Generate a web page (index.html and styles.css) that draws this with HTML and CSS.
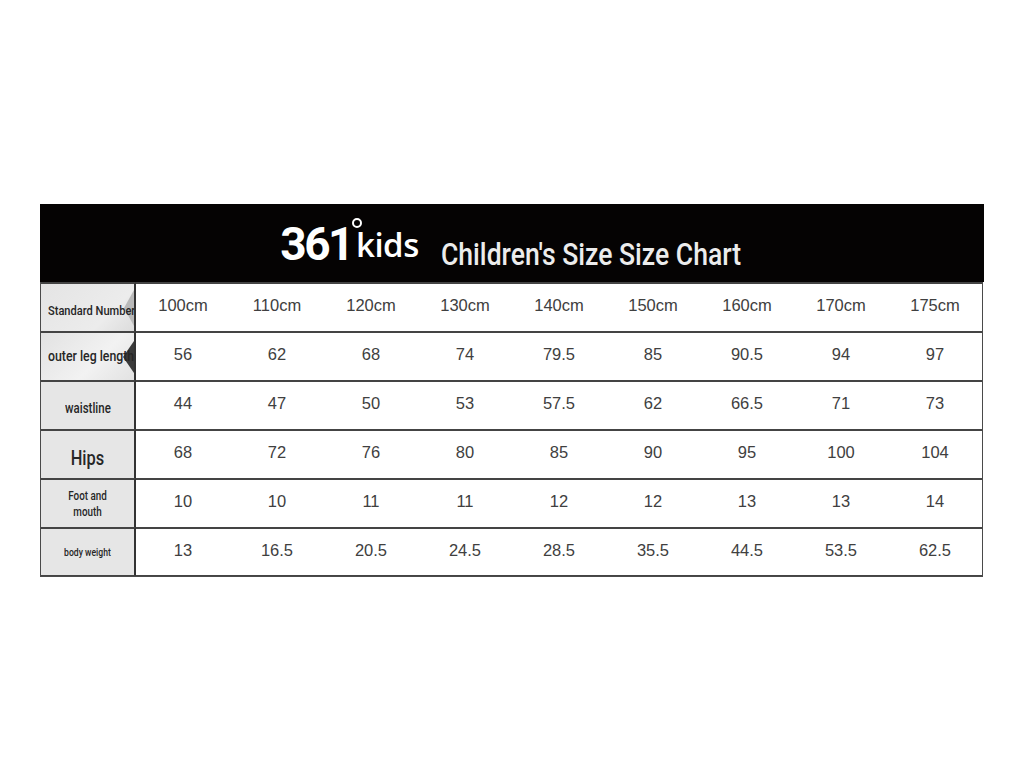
FILE: index.html
```html
<!DOCTYPE html>
<html>
<head>
<meta charset="utf-8">
<link rel="stylesheet" href="styles.css">
</head>
<body>
<div class="chart">
  <div class="head">
    <div class="logo"><span class="num">361</span><span class="deg"></span><span class="kids">kids</span></div>
    <div class="title"><span>Children's Size Size Chart</span></div>
  </div>
  <div class="grid">
    <div class="lab l1"><span>Standard Number</span><i class="shade"></i></div>
    <div class="v">100cm</div><div class="v">110cm</div><div class="v">120cm</div><div class="v">130cm</div><div class="v">140cm</div><div class="v">150cm</div><div class="v">160cm</div><div class="v">170cm</div><div class="v">175cm</div>

    <div class="lab l2"><span>outer leg length</span><i class="arrow"></i></div>
    <div class="v">56</div><div class="v">62</div><div class="v">68</div><div class="v">74</div><div class="v">79.5</div><div class="v">85</div><div class="v">90.5</div><div class="v">94</div><div class="v">97</div>

    <div class="lab l3"><span>waistline</span></div>
    <div class="v">44</div><div class="v">47</div><div class="v">50</div><div class="v">53</div><div class="v">57.5</div><div class="v">62</div><div class="v">66.5</div><div class="v">71</div><div class="v">73</div>

    <div class="lab l4"><span>Hips</span></div>
    <div class="v">68</div><div class="v">72</div><div class="v">76</div><div class="v">80</div><div class="v">85</div><div class="v">90</div><div class="v">95</div><div class="v">100</div><div class="v">104</div>

    <div class="lab l5"><span>Foot and<br>mouth</span></div>
    <div class="v">10</div><div class="v">10</div><div class="v">11</div><div class="v">11</div><div class="v">12</div><div class="v">12</div><div class="v">13</div><div class="v">13</div><div class="v">14</div>

    <div class="lab l6 last"><span>body weight</span></div>
    <div class="v last">13</div><div class="v last">16.5</div><div class="v last">20.5</div><div class="v last">24.5</div><div class="v last">28.5</div><div class="v last">35.5</div><div class="v last">44.5</div><div class="v last">53.5</div><div class="v last">62.5</div>
  </div>
</div>
</body>
</html>
```

FILE: styles.css
```css
html, body {
  margin: 0;
  padding: 0;
  background: #ffffff;
}
body {
  padding: 204px 0 0 40px;
}
.chart {
  width: 943px;
  box-sizing: border-box;
  border: 1.5px solid #4a4a4a;
  border-top: none;
}
.head {
  height: 78px;
  background: #050303;
  display: flex;
  align-items: flex-end;
  justify-content: center;
  padding-bottom: 10px;
  box-sizing: border-box;
  gap: 22px;
  margin: 0 -1.5px;
}
.logo {
  display: flex;
  align-items: flex-end;
  color: #ffffff;
  height: 46px;
  margin-bottom: 8px;
}
.num {
  font-family: "Roboto", sans-serif;
  font-weight: 700;
  font-size: 46px;
  line-height: 40px;
  letter-spacing: -2.5px;
}
.deg {
  width: 6px;
  height: 6px;
  border: 2.5px solid #ffffff;
  border-radius: 50%;
  align-self: flex-start;
}
.kids {
  font-family: "Open Sans", sans-serif;
  font-weight: 600;
  font-size: 33px;
  line-height: 38px;
  margin-left: -6px;
  letter-spacing: -0.5px;
}
.title {
  color: #ececec;
  width: 302px;
  height: 36px;
  white-space: nowrap;
}
.title span {
  display: inline-block;
  font-family: "Roboto", sans-serif;
  font-weight: 500;
  font-size: 32px;
  line-height: 36px;
  transform: scaleX(0.83);
  transform-origin: left;
}
.grid {
  display: grid;
  grid-template-columns: 95px repeat(9, 1fr);
  grid-template-rows: repeat(6, 49px);
}
.grid > div {
  border-top: 2px solid #444;
  box-sizing: border-box;
}
.v {
  display: flex;
  align-items: center;
  justify-content: center;
  padding-bottom: 4px;
  font-family: "Liberation Sans", Arial, sans-serif;
  font-size: 16.5px;
  color: #404040;
  background: #fff;
}
.lab {
  background: #e6e6e6;
  border-right: 2px solid #333;
  display: flex;
  align-items: center;
  justify-content: center;
  overflow: hidden;
  position: relative;
  font-family: "Roboto", sans-serif;
  font-weight: 500;
  color: #262626;
  text-align: center;
  white-space: nowrap;
}
.lab span {
  position: relative;
  z-index: 1;
  display: inline-block;
  transform: scaleX(0.82);
}
.l1, .l2 {
  justify-content: flex-start;
  padding-left: 7px;
}
.l1 span, .l2 span {
  transform-origin: left;
}
.l1 {
  font-size: 13.5px;
  padding-top: 4px;
  background: linear-gradient(135deg, #e4e4e4 0%, #ececec 70%, #dcdcdc 100%);
}
.l2 {
  font-size: 15px;
  padding-bottom: 1px;
  background: linear-gradient(135deg, #e2e2e2 0%, #f2f2f2 60%, #e2e2e2 100%);
}
.l3 {
  font-size: 14px;
  padding-top: 4px;
}
.l4 {
  font-size: 20px;
  padding-top: 6px;
}
.l5 {
  font-size: 12px;
  line-height: 16px;
  white-space: normal;
}
.l6 {
  font-size: 10.5px;
}
.shade {
  position: absolute;
  right: 0;
  top: 6px;
  width: 0;
  height: 0;
  border-top: 18px solid transparent;
  border-bottom: 18px solid transparent;
  border-right: 10px solid #b9b9b9;
  z-index: 0;
}
.arrow {
  position: absolute;
  right: 0;
  top: 8px;
  width: 0;
  height: 0;
  border-top: 16px solid transparent;
  border-bottom: 16px solid transparent;
  border-right: 11px solid #3a3a3a;
  z-index: 0;
}
.last {
  border-bottom: 1.5px solid #444;
}
```
